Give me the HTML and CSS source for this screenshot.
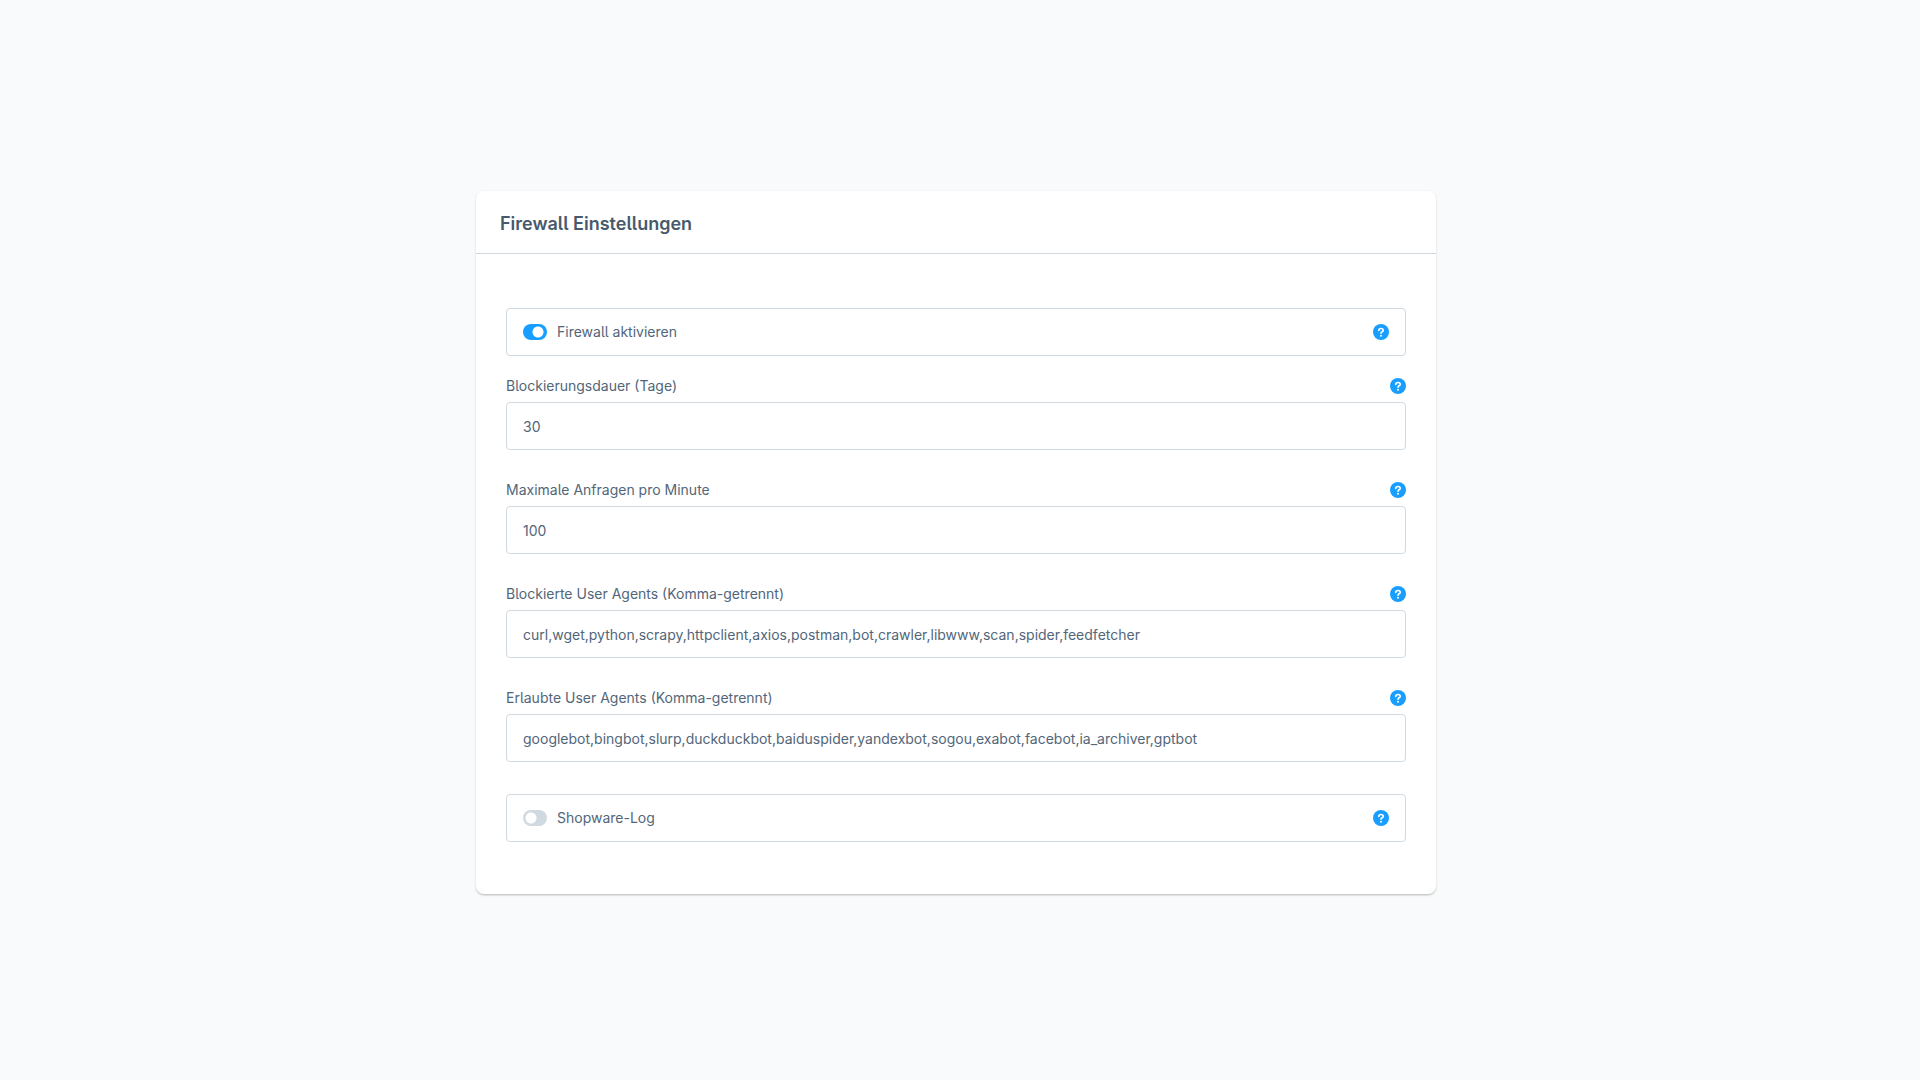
FILE: index.html
```html
<!DOCTYPE html>
<html lang="de">
<head>
<meta charset="utf-8">
<title>Firewall Einstellungen</title>
<meta name="viewport" content="width=device-width, initial-scale=1">
<link rel="stylesheet" href="styles.css">
</head>
<body>
<svg class="sprite">
  <symbol id="help" viewBox="0 0 16 16"><circle cx="8" cy="8" r="8" fill="#189eff"/><path d="M5.800 6.500C5.800 5.200 6.800 4.500 8 4.500s2.200.7 2.200 1.900c0 1.500-2.200 1.300-2.200 2.800" fill="none" stroke="#fff" stroke-width="1.600" stroke-linecap="round" stroke-linejoin="round"/><circle cx="8" cy="11.800" r="1" fill="#fff"/></symbol>
</svg>
<main class="card">
  <header class="card-header"><h1 class="card-title">Firewall Einstellungen</h1></header>
  <form class="card-content">
    <div class="switch-field">
      <input class="switch" type="checkbox" id="active" checked>
      <label class="label" for="active">Firewall aktivieren</label>
      <button class="help" type="button" aria-label="Hilfe"><svg class="help-icon"><use href="#help"/></svg></button>
    </div>
    <div class="field">
      <div class="field-head"><label class="label" for="days">Blockierungsdauer (Tage)</label><button class="help" type="button" aria-label="Hilfe"><svg class="help-icon"><use href="#help"/></svg></button></div>
      <input class="input" type="text" id="days" value="30">
    </div>
    <div class="field">
      <div class="field-head"><label class="label" for="limit">Maximale Anfragen pro Minute</label><button class="help" type="button" aria-label="Hilfe"><svg class="help-icon"><use href="#help"/></svg></button></div>
      <input class="input" type="text" id="limit" value="100">
    </div>
    <div class="field">
      <div class="field-head"><label class="label" for="blocked">Blockierte User Agents (Komma-getrennt)</label><button class="help" type="button" aria-label="Hilfe"><svg class="help-icon"><use href="#help"/></svg></button></div>
      <input class="input" type="text" id="blocked" value="curl,wget,python,scrapy,httpclient,axios,postman,bot,crawler,libwww,scan,spider,feedfetcher">
    </div>
    <div class="field">
      <div class="field-head"><label class="label" for="allowed">Erlaubte User Agents (Komma-getrennt)</label><button class="help" type="button" aria-label="Hilfe"><svg class="help-icon"><use href="#help"/></svg></button></div>
      <input class="input" type="text" id="allowed" value="googlebot,bingbot,slurp,duckduckbot,baiduspider,yandexbot,sogou,exabot,facebot,ia_archiver,gptbot">
    </div>
    <div class="switch-field">
      <input class="switch" type="checkbox" id="log">
      <label class="label" for="log">Shopware-Log</label>
      <button class="help" type="button" aria-label="Hilfe"><svg class="help-icon"><use href="#help"/></svg></button>
    </div>
  </form>
</main>
</body>
</html>
```
FILE: styles.css
```css
* { box-sizing: border-box; }
body {
  margin: 0;
  padding: 191px 32px 64px 24px;
  background: #f9fafb;
  color: #52667a;
  font: 14px/20px Inter, sans-serif;
}
.sprite { display: none; }
.card {
  max-width: 960px;
  margin: 0 auto;
  background: #fff;
  border-radius: 8px;
  box-shadow: 0 1px 1px rgba(0, 0, 0, .08), 0 2px 1px rgba(0, 0, 0, .06), 0 1px 3px rgba(0, 0, 0, .1);
}
.card-header { padding: 22px 24px 18px; border-bottom: 1px solid #d1d9e0; }
.card-title {
  margin: 0;
  color: #475a6b;
  font-size: 18px;
  line-height: 22px;
  font-weight: 600;
}
.card-title, .label { font-feature-settings: "cv05"; }
.card-content { padding: 22px 30px 52px; }
.switch-field {
  display: flex;
  align-items: center;
  height: 48px;
  margin: 32px 0 20px;
  padding: 0 16px;
  gap: 10px;
  border: 1px solid #d1d9e0;
  border-radius: 4px;
}
.switch-field:last-child { margin-bottom: 0; }
.switch {
  appearance: none;
  width: 24px;
  height: 16px;
  margin: 0;
  border-radius: 8px;
  background: radial-gradient(circle at 8px 8px, #fff 5px, #d1d9e0 6px);
}
.switch:checked { background: radial-gradient(circle at 15px 8px, #fff 5px, #189eff 6px); }
.field { margin-bottom: 30px; }
.field-head { display: flex; align-items: center; margin-bottom: 6px; }
.help { display: flex; margin: 0 0 0 auto; padding: 0; border: 0; background: none; cursor: pointer; }
.help-icon { width: 16px; height: 16px; }
.input {
  display: block;
  width: 100%;
  height: 48px;
  padding: 0 16px;
  border: 1px solid #d1d9e0;
  border-radius: 4px;
  background: #fff;
  color: inherit;
  font: inherit;
}
```
